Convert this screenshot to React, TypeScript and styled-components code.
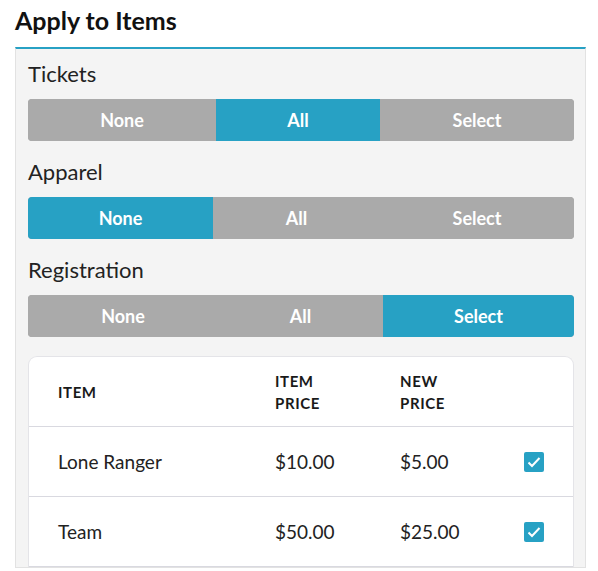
import React from "react";
import styled, { createGlobalStyle } from "styled-components";

const GlobalStyle = createGlobalStyle`
  body {
    margin: 0;
    background: #ffffff;
    font-family: Lato, "Noto Sans", sans-serif;
    color: #1f1f1f;
  }
`;

const Page = styled.div`
  box-sizing: border-box;
  padding: 5px 12px 0 15px;
`;

const Title = styled.h2`
  margin: 0 0 11px;
  font-size: 25px;
  line-height: 31px;
  font-weight: 700;
  color: #111;
`;

const Panel = styled.div`
  box-sizing: border-box;
  background: #f4f4f4;
  border: 1px solid #e2e2e2;
  border-top: 2px solid #27a1c4;
  padding: 12px 11px 0 12px;
`;

const GroupLabel = styled.div<{ $first?: boolean }>`
  font-size: 22px;
  line-height: 26px;
  margin: ${(p) => (p.$first ? "0" : "18px")} 0 12px;
  color: #222;
`;

const Segmented = styled.div`
  display: flex;
  height: 42px;
  border-radius: 4px;
  overflow: hidden;
  background: #aaaaaa;
`;

const Segment = styled.button<{ $active: boolean; $grow: number }>`
  flex: ${(p) => p.$grow} 1 0;
  border: none;
  margin: 0;
  padding: 0;
  background: ${(p) => (p.$active ? "#27a1c4" : "#aaaaaa")};
  color: #ffffff;
  font-family: Lato, "Noto Sans", sans-serif;
  font-weight: 700;
  font-size: 18px;
  cursor: pointer;
`;

const TableCard = styled.div`
  margin-top: 19px;
  background: #ffffff;
  border: 1px solid #e4e4e8;
  border-bottom: none;
  border-radius: 9px 9px 0 0;
`;

const Row = styled.div`
  box-sizing: border-box;
  display: grid;
  grid-template-columns: 217px 125px 1fr 20px;
  align-items: center;
  height: 70px;
  padding: 0 29px;
  border-bottom: 1px solid #d9d9e0;
`;

const HeadCell = styled.div`
  font-size: 15px;
  line-height: 22px;
  font-weight: 700;
  letter-spacing: 0.6px;
  text-transform: uppercase;
  max-width: 70px;
  color: #1a1a1a;
`;

const Cell = styled.div`
  font-size: 19px;
  color: #222;
`;

const Check = styled.span`
  display: flex;
  align-items: center;
  justify-content: center;
  width: 20px;
  height: 20px;
  border-radius: 2px;
  background: #27a1c4;
`;

const groups = [
  { label: "Tickets", active: 1, widths: [188, 164, 194] },
  { label: "Apparel", active: 0, widths: [185, 167, 194] },
  { label: "Registration", active: 2, widths: [190, 165, 191] },
];

const options = ["None", "All", "Select"];

const items = [
  { name: "Lone Ranger", price: "$10.00", newPrice: "$5.00" },
  { name: "Team", price: "$50.00", newPrice: "$25.00" },
];

export default function App() {
  return (
    <Page>
      <GlobalStyle />
      <Title>Apply to Items</Title>
      <Panel>
        {groups.map((g, i) => (
          <div key={g.label}>
            <GroupLabel $first={i === 0}>{g.label}</GroupLabel>
            <Segmented>
              {options.map((o, j) => (
                <Segment key={o} $active={g.active === j} $grow={g.widths[j]}>
                  {o}
                </Segment>
              ))}
            </Segmented>
          </div>
        ))}
        <TableCard>
          <Row>
            <HeadCell>Item</HeadCell>
            <HeadCell>Item Price</HeadCell>
            <HeadCell>New Price</HeadCell>
            <span />
          </Row>
          {items.map((it) => (
            <Row key={it.name}>
              <Cell>{it.name}</Cell>
              <Cell>{it.price}</Cell>
              <Cell>{it.newPrice}</Cell>
              <Check>
                <svg width="16" height="16" viewBox="0 0 16 16">
                  <polyline points="2.5,8.5 6,12 13.5,4" fill="none" stroke="#fff" strokeWidth="2" />
                </svg>
              </Check>
            </Row>
          ))}
        </TableCard>
      </Panel>
    </Page>
  );
}
